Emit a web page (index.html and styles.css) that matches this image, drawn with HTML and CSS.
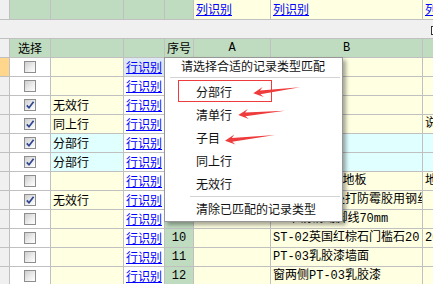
FILE: index.html
```html
<!DOCTYPE html>
<html lang="zh-CN">
<head>
  <meta charset="UTF-8" />
  <meta name="viewport" content="width=device-width, initial-scale=1.0" />
  <title>记录类型匹配</title>
  <link rel="stylesheet" href="styles.css">
</head>
<body>
  <div class="sheet">
    <div class="row top">
      <div class="cell rh"></div>
      <div class="cell hd"></div>
      <div class="cell hd"></div>
      <div class="cell hd"></div>
      <div class="cell hd"></div>
      <div class="cell yl"><a href="#">列识别</a></div>
      <div class="cell yl"><a href="#">列识别</a></div>
      <div class="cell yl"><a href="#">列识别</a></div>
    </div>

    <div class="row band">
      <div class="band-fill"></div>
      <div class="band-end"><span class="fold"></span></div>
    </div>

    <div class="row">
      <div class="cell rh"></div>
      <div class="cell hd center">选择</div>
      <div class="cell hd"></div>
      <div class="cell hd"></div>
      <div class="cell hd center">序号</div>
      <div class="cell hd center mono">A</div>
      <div class="cell hd center mono">B</div>
      <div class="cell hd"></div>
    </div>

    <div class="row">
      <div class="cell rh current"></div>
      <div class="cell chk"><span class="box"></span></div>
      <div class="cell yl"></div>
      <div class="cell sel"><a href="#">行识别</a></div>
      <div class="cell hd"></div>
      <div class="cell yl"></div>
      <div class="cell yl mono"></div>
      <div class="cell yl mono"></div>
    </div>
    <div class="row">
      <div class="cell rh"></div>
      <div class="cell chk"><span class="box"></span></div>
      <div class="cell yl"></div>
      <div class="cell"><a href="#">行识别</a></div>
      <div class="cell hd"></div>
      <div class="cell yl"></div>
      <div class="cell yl mono"></div>
      <div class="cell yl mono"></div>
    </div>
    <div class="row">
      <div class="cell rh"></div>
      <div class="cell chk"><span class="box on"><svg viewBox="0 0 10 10"><path d="M1.8 5.4 4 7.8 8.6 1.8"/></svg></span></div>
      <div class="cell yl">无效行</div>
      <div class="cell"><a href="#">行识别</a></div>
      <div class="cell hd"></div>
      <div class="cell yl"></div>
      <div class="cell yl mono"></div>
      <div class="cell yl mono"></div>
    </div>
    <div class="row">
      <div class="cell rh"></div>
      <div class="cell chk"><span class="box on"><svg viewBox="0 0 10 10"><path d="M1.8 5.4 4 7.8 8.6 1.8"/></svg></span></div>
      <div class="cell yl">同上行</div>
      <div class="cell"><a href="#">行识别</a></div>
      <div class="cell hd"></div>
      <div class="cell yl"></div>
      <div class="cell yl mono"></div>
      <div class="cell yl mono">说明</div>
    </div>
    <div class="row">
      <div class="cell rh"></div>
      <div class="cell chk"><span class="box on"><svg viewBox="0 0 10 10"><path d="M1.8 5.4 4 7.8 8.6 1.8"/></svg></span></div>
      <div class="cell cy">分部行</div>
      <div class="cell"><a href="#">行识别</a></div>
      <div class="cell hd"></div>
      <div class="cell cy"></div>
      <div class="cell cy mono"></div>
      <div class="cell cy mono"></div>
    </div>
    <div class="row">
      <div class="cell rh"></div>
      <div class="cell chk"><span class="box on"><svg viewBox="0 0 10 10"><path d="M1.8 5.4 4 7.8 8.6 1.8"/></svg></span></div>
      <div class="cell cy">分部行</div>
      <div class="cell"><a href="#">行识别</a></div>
      <div class="cell hd"></div>
      <div class="cell cy"></div>
      <div class="cell cy mono"></div>
      <div class="cell cy mono"></div>
    </div>
    <div class="row">
      <div class="cell rh"></div>
      <div class="cell chk"><span class="box"></span></div>
      <div class="cell yl"></div>
      <div class="cell"><a href="#">行识别</a></div>
      <div class="cell hd"></div>
      <div class="cell yl"></div>
      <div class="cell yl mono">2F-走廊实木地板</div>
      <div class="cell yl mono">地面</div>
    </div>
    <div class="row">
      <div class="cell rh"></div>
      <div class="cell chk"><span class="box on"><svg viewBox="0 0 10 10"><path d="M1.8 5.4 4 7.8 8.6 1.8"/></svg></span></div>
      <div class="cell yl">无效行</div>
      <div class="cell"><a href="#">行识别</a></div>
      <div class="cell hd"></div>
      <div class="cell yl"></div>
      <div class="cell yl mono">卫生间墙角处打防霉胶用钢丝网</div>
      <div class="cell yl mono"></div>
    </div>
    <div class="row">
      <div class="cell rh"></div>
      <div class="cell chk"><span class="box"></span></div>
      <div class="cell yl"></div>
      <div class="cell"><a href="#">行识别</a></div>
      <div class="cell hd"></div>
      <div class="cell yl"></div>
      <div class="cell yl mono">SS不锈钢踢脚线70mm</div>
      <div class="cell yl mono"></div>
    </div>
    <div class="row">
      <div class="cell rh"></div>
      <div class="cell chk"><span class="box"></span></div>
      <div class="cell yl"></div>
      <div class="cell"><a href="#">行识别</a></div>
      <div class="cell hd center mono">10</div>
      <div class="cell yl"></div>
      <div class="cell yl mono">ST-02英国红棕石门槛石20</div>
      <div class="cell yl mono">20厚</div>
    </div>
    <div class="row">
      <div class="cell rh"></div>
      <div class="cell chk"><span class="box"></span></div>
      <div class="cell yl"></div>
      <div class="cell"><a href="#">行识别</a></div>
      <div class="cell hd center mono">11</div>
      <div class="cell yl"></div>
      <div class="cell yl mono">PT-03乳胶漆墙面</div>
      <div class="cell yl mono"></div>
    </div>
    <div class="row">
      <div class="cell rh"></div>
      <div class="cell chk"><span class="box"></span></div>
      <div class="cell yl"></div>
      <div class="cell"><a href="#">行识别</a></div>
      <div class="cell hd center mono">12</div>
      <div class="cell yl"></div>
      <div class="cell yl mono">窗两侧PT-03乳胶漆</div>
      <div class="cell yl mono"></div>
    </div>
  </div>

  <!-- context menu over the grid -->
  <div class="menu">
    <div class="menu-title">请选择合适的记录类型匹配</div>
    <div class="menu-sep first"></div>
    <ul class="menu-items">
      <li>分部行</li>
      <li>清单行</li>
      <li>子目</li>
      <li>同上行</li>
      <li>无效行</li>
    </ul>
    <div class="menu-sep"></div>
    <div class="menu-clear">清除已匹配的记录类型</div>
  </div>

  <!-- screenshot annotations -->
  <svg class="marks" width="433" height="284" viewBox="0 0 433 284">
    <rect x="178.5" y="80.5" width="93" height="21" />
    <polygon points="300,87.3 260,90.6 262.6,87 253.3,93.3 263.8,97 260.4,94.2" />
    <polygon points="285,110.7 245.1,112.6 247.8,109.1 238.3,115 248.8,119.1 245.5,116.2" />
    <polygon points="275,135 231.8,138.1 234.3,134.6 225,140.7 235.5,144.6 232.2,141.7" />
  </svg>
</body>
</html>
```

FILE: styles.css
```css
:root {
  --grid: #c0c0c0;
  --head: #c0dcc0;
  --yellow: #ffffe1;
  --cyan: #e0ffff;
  --band: #f0f0f0;
  --link: #0000ff;
  --cols: 10px 41px 73px 41px 29px 77px 152px 60px;
}

html, body {
  margin: 0;
  overflow: hidden;
}

body {
  position: relative;
  width: 433px;
  height: 284px;
  font-family: "Noto Sans CJK SC", sans-serif;
  font-size: 12px;
  color: #000;
  background: #fff;
}

.sheet {
  display: flex;
  flex-direction: column;
  width: 483px;
}

.row {
  display: grid;
  grid-template-columns: var(--cols);
  height: 19px;
}

.row.top {
  height: 20px;
}

.cell {
  box-sizing: border-box;
  border-right: 1px solid var(--grid);
  border-bottom: 1px solid var(--grid);
  padding: 0 2px;
  line-height: 18px;
  white-space: nowrap;
  overflow: hidden;
  background: #fff;
}

.cell a {
  color: var(--link);
  text-decoration: underline;
}

.center {
  text-align: center;
}

.mono {
  font-family: "Liberation Mono", "Noto Sans CJK SC", monospace;
}

.rh {
  background: var(--band);
}

.rh.current {
  background: #ffd68c;
}

.hd {
  background: var(--head);
}

.yl {
  background: var(--yellow);
}

.cy {
  background: var(--cyan);
}

.sel {
  background: #dfe8f5;
}

/* grey band under the column header */
.band {
  background: var(--band);
}

.band-fill {
  grid-column: 1 / 8;
  border-bottom: 1px solid var(--grid);
}

.band-end {
  border-bottom: 1px solid var(--grid);
}

.fold {
  display: block;
  width: 9px;
  height: 9px;
  margin: 6px 0 0 8px;
  box-sizing: border-box;
  border: 1px solid #333;
  background: #fff;
}

/* checkboxes */
.chk {
  display: flex;
  align-items: center;
  justify-content: center;
  padding: 0;
}

.box {
  display: block;
  width: 12px;
  height: 12px;
  box-sizing: border-box;
  border: 1px solid #8e8e8e;
  background: linear-gradient(135deg, #cdcdcd 0%, #ececec 55%, #fff 100%);
}

.box svg {
  display: block;
  width: 10px;
  height: 10px;
}

.box svg path {
  fill: none;
  stroke: #2c4591;
  stroke-width: 1.7;
}

/* context menu */
.menu {
  position: absolute;
  left: 164px;
  top: 57px;
  width: 179px;
  height: 165px;
  box-sizing: border-box;
  border: 1px solid #979797;
  background: #fff;
  box-shadow: 3px 3px 4px rgba(0, 0, 0, 0.35);
  font-size: 12px;
  color: #111;
}

.menu-title {
  height: 19px;
  box-sizing: border-box;
  padding: 0 0 3px 16px;
  line-height: 16px;
  white-space: nowrap;
}

.menu-sep {
  height: 1px;
  margin: 1px 2px 0 25px;
  background: #d3d3d3;
}

.menu-sep.first {
  margin: 0 2px 0 5px;
}

.menu-items {
  list-style: none;
  margin: 0;
  padding: 2px 0 0;
}

.menu-items li {
  height: 23px;
  line-height: 23px;
  padding-left: 31px;
}

.menu-clear {
  height: 24px;
  line-height: 24px;
  padding-left: 31px;
  white-space: nowrap;
}

/* red annotation marks */
.marks {
  position: absolute;
  left: 0;
  top: 0;
  pointer-events: none;
}

.marks rect {
  fill: none;
  stroke: #ee3b3b;
  stroke-width: 1;
}

.marks polygon {
  fill: #ee3b3b;
}
```
